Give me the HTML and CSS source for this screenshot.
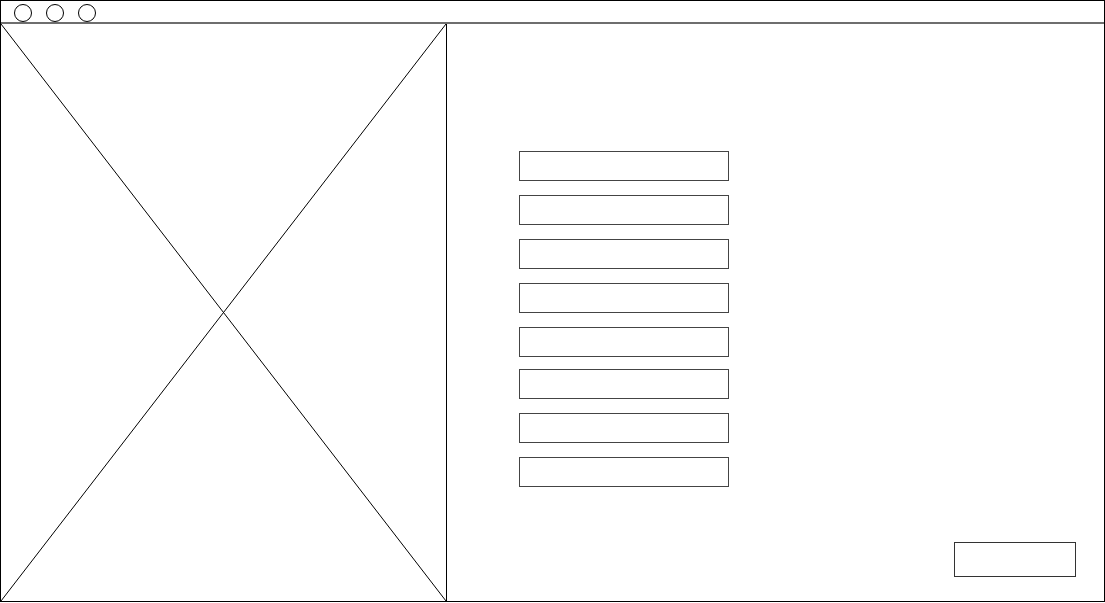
FILE: index.html
```html
<!DOCTYPE html>
<html lang="en">
<head>
    <meta charset="UTF-8">
    <meta name="viewport" content="width=device-width, initial-scale=1.0">
    <title>Sign Up</title>
    <link rel="stylesheet" href="styles.css">
</head>
<body>
    <div class="window">
        <!-- Title bar -->
        <div class="titlebar">
            <span class="dot"></span>
            <span class="dot"></span>
            <span class="dot"></span>
        </div>

        <div class="main">
            <!-- Image placeholder -->
            <div class="image">
                <svg viewBox="0 0 100 100" preserveAspectRatio="none">
                    <line x1="0" y1="0" x2="100" y2="100" vector-effect="non-scaling-stroke"/>
                    <line x1="100" y1="0" x2="0" y2="100" vector-effect="non-scaling-stroke"/>
                </svg>
            </div>

            <!-- Form -->
            <div class="content">
                <form class="fields">
                    <input type="text">
                    <input type="text">
                    <input type="text">
                    <input type="text">
                    <input type="text">
                    <input type="text" class="tight">
                    <input type="text">
                    <input type="text">
                </form>
                <button type="button"></button>
            </div>
        </div>
    </div>
</body>
</html>
```

FILE: styles.css
```css
* {
    box-sizing: border-box;
}

body {
    margin: 0;
    background-color: #fff;
    font-family: "Liberation Sans", Arial, sans-serif;
}

/* Window frame */
.window {
    width: 1105px;
    height: 602px;
    border: 1px solid #000;
    display: flex;
    flex-direction: column;
}

.titlebar {
    height: 23px;
    flex-shrink: 0;
    display: flex;
    gap: 14px;
    padding: 3px 0 0 13px;
    border-bottom: 2px solid #6e6e6e;
}

.dot {
    width: 18px;
    height: 18px;
    border: 1px solid #000;
    border-radius: 50%;
}

.main {
    flex: 1;
    display: flex;
}

/* Placeholder picture */
.image {
    width: 446px;
    border-right: 1px solid #000;
    flex-shrink: 0;
}

.image svg {
    display: block;
    width: 100%;
    height: 100%;
}

.image line {
    stroke: #000;
    stroke-width: 1;
}

.content {
    flex: 1;
    display: flex;
    flex-direction: column;
    padding: 127px 28px 24px 72px;
}

.fields {
    display: flex;
    flex-direction: column;
    gap: 14px;
    margin: 0;
}

input[type="text"] {
    width: 210px;
    height: 30px;
    margin: 0;
    border: 1px solid #444;
    border-radius: 0;
    background-color: #fff;
}

input.tight {
    margin-top: -2px;
}

button {
    margin-top: auto;
    align-self: flex-end;
    width: 122px;
    height: 35px;
    border: 1px solid #333;
    border-radius: 0;
    background-color: #fff;
}
```
